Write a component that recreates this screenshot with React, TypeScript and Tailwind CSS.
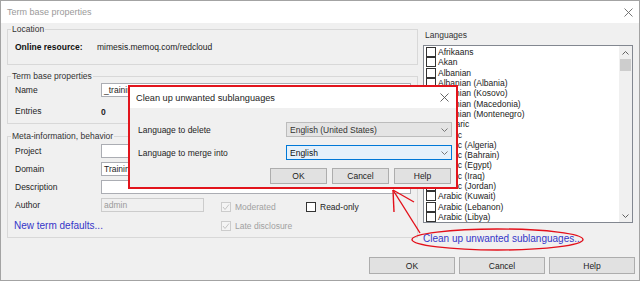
import React from "react";

const FONT = { fontFamily: '"Liberation Sans", Arial, sans-serif' };

function Check({ checked = false, disabled = false }: { checked?: boolean; disabled?: boolean }) {
  return (
    <span
      className={`flex h-[10px] w-[10px] shrink-0 items-center justify-center border ${
        disabled ? "border-[#cccccc] bg-[#f4f4f4]" : "border-[#333333] bg-white"
      }`}
    >
      {checked && (
        <svg width="8" height="8" viewBox="0 0 8 8">
          <polyline points="1,4 3,6.5 7,1.5" fill="none" stroke={disabled ? "#c4c4c4" : "#222"} strokeWidth="1" />
        </svg>
      )}
    </span>
  );
}

function Chevron({ up = false, color = "#555" }: { up?: boolean; color?: string }) {
  return (
    <svg width="7" height="4" viewBox="0 0 7 4">
      <polyline points={up ? "0.5,3.5 3.5,0.5 6.5,3.5" : "0.5,0.5 3.5,3.5 6.5,0.5"} fill="none" stroke={color} strokeWidth="1" />
    </svg>
  );
}

function Close({ size = 9, color = "#555" }: { size?: number; color?: string }) {
  return (
    <svg width={size} height={size} viewBox="0 0 9 9">
      <path d="M0.5 0.5 L8.5 8.5 M8.5 0.5 L0.5 8.5" stroke={color} strokeWidth="0.9" fill="none" />
    </svg>
  );
}

function Btn({ label, w }: { label: string; w: string }) {
  return (
    <div className={`flex h-full items-center justify-center border border-[#adadad] bg-[#e1e1e1] text-[8.5px] text-[#222] ${w}`}>
      {label}
    </div>
  );
}

const languages = [
  "Afrikaans",
  "Akan",
  "Albanian",
  "Albanian (Albania)",
  "Albanian (Kosovo)",
  "Albanian (Macedonia)",
  "Albanian (Montenegro)",
  "Amharic",
  "Arabic",
  "Arabic (Algeria)",
  "Arabic (Bahrain)",
  "Arabic (Egypt)",
  "Arabic (Iraq)",
  "Arabic (Jordan)",
  "Arabic (Kuwait)",
  "Arabic (Lebanon)",
  "Arabic (Libya)",
];

export default function App() {
  return (
    <div className="relative h-[281px] w-[640px] overflow-hidden bg-white" style={FONT}>
      {/* main window */}
      <div className="flex h-[281px] w-[640px] flex-col border border-[#a3a3a3] bg-[#f0f0f0] text-[8.5px] leading-[10px] text-[#1e1e1e]">
        {/* title bar */}
        <div className="flex h-[22px] shrink-0 items-center justify-between bg-white pl-[6px] pr-[6px]">
          <span className="text-[9px] text-[#9a9a9a]">Term base properties</span>
          <Close size={9} color="#666" />
        </div>

        {/* top section */}
        <div className="flex h-[234px] shrink-0 flex-row">
          {/* left column */}
          <div className="ml-[6px] flex w-[411px] flex-col">
            <fieldset className="mt-[1px] h-[41px] border border-[#d8d8d8]">
              <legend className="ml-[3px] px-[1px] leading-[10px] text-[#333]">Location</legend>
              <div className="mt-[8px] flex flex-row pl-[7px]">
                <span className="w-[82px] font-bold text-[#111]">Online resource:</span>
                <span className="text-[#222]">mimesis.memoq.com/redcloud</span>
              </div>
            </fieldset>

            <fieldset className="mt-[6px] h-[53px] border border-[#d8d8d8]">
              <legend className="ml-[3px] px-[1px] leading-[10px] text-[#333]">Term base properties</legend>
              <div className="mt-[2px] flex h-[14px] flex-row items-center pl-[7px]">
                <span className="w-[86px]">Name</span>
                <div className="flex h-[14px] w-[310px] items-center border border-[#abadb3] bg-white pl-[2px]">_training</div>
              </div>
              <div className="mt-[8px] flex flex-row items-center pl-[7px]">
                <span className="w-[86px]">Entries</span>
                <span className="mt-[2px] font-bold">0</span>
              </div>
            </fieldset>

            <fieldset className="mt-[7px] h-[107px] border border-[#d8d8d8]">
              <legend className="ml-[3px] px-[1px] leading-[10px] text-[#333]">Meta-information, behavior</legend>
              <div className="mt-[3px] flex flex-col gap-[4px] pl-[7px]">
                <div className="flex h-[14px] flex-row items-center">
                  <span className="w-[86px]">Project</span>
                  <div className="h-[14px] w-[310px] border border-[#abadb3] bg-white" />
                </div>
                <div className="flex h-[14px] flex-row items-center">
                  <span className="w-[86px]">Domain</span>
                  <div className="flex h-[14px] w-[310px] items-center border border-[#abadb3] bg-white pl-[2px]">Training</div>
                </div>
                <div className="flex h-[14px] flex-row items-center">
                  <span className="w-[86px]">Description</span>
                  <div className="h-[14px] w-[310px] border border-[#abadb3] bg-white" />
                </div>
                <div className="flex h-[14px] flex-row items-center">
                  <span className="w-[86px]">Author</span>
                  <div className="flex h-[14px] w-[103px] items-center border border-[#cccccc] bg-[#f0f0f0] pl-[2px] text-[#9a9a9a]">
                    admin
                  </div>
                  <div className="ml-[17px] flex w-[85px] flex-row items-center gap-[4px] self-end">
                    <Check checked disabled />
                    <span className="text-[#a0a0a0]">Moderated</span>
                  </div>
                  <div className="flex flex-row items-center gap-[4px] self-end">
                    <Check />
                    <span>Read-only</span>
                  </div>
                </div>
              </div>
              <div className="mt-[8px] flex flex-row items-center pl-[6px]">
                <span className="w-[207px] text-[10px] leading-[12px] text-[#3535c8]">New term defaults...</span>
                <div className="flex flex-row items-center gap-[4px]">
                  <Check checked disabled />
                  <span className="text-[#a0a0a0]">Late disclosure</span>
                </div>
              </div>
            </fieldset>
          </div>

          {/* right column */}
          <div className="ml-[5px] flex w-[210px] flex-col">
            <span className="mt-[7px] pl-[2px] text-[#333]">Languages</span>
            <div className="mt-[5px] flex h-[178px] flex-row border border-[#828790] bg-white">
              <div className="flex flex-1 flex-col pl-[2px] pt-[1px]">
                {languages.map((l) => (
                  <div key={l} className="flex h-[10.3px] flex-row items-center gap-[2px]">
                    <Check />
                    <span className="text-[#1a1a1a]">{l}</span>
                  </div>
                ))}
              </div>
              <div className="flex w-[13px] flex-col items-center bg-[#f0f0f0]">
                <div className="flex h-[13px] items-center justify-center">
                  <Chevron up color="#606060" />
                </div>
                <div className="h-[12px] w-[11px] bg-[#cdcdcd]" />
                <div className="flex-1" />
                <div className="flex h-[13px] items-center justify-center">
                  <Chevron color="#606060" />
                </div>
              </div>
            </div>
            <span className="mt-[10px] text-[10px] leading-[12px] text-[#3535c8]">Clean up unwanted sublanguages...</span>
          </div>
        </div>

        {/* bottom buttons */}
        <div className="flex h-[17px] flex-row justify-end gap-[4px] pr-[4px]">
          <Btn label="OK" w="w-[86px]" />
          <Btn label="Cancel" w="w-[86px]" />
          <Btn label="Help" w="w-[86px]" />
        </div>
      </div>

      {/* dialog overlay */}
      <div className="absolute left-[128px] top-[85px] flex h-[104px] w-[330px] flex-col border-2 border-[#e2141c] bg-[#f0f0f0] text-[8.5px] leading-[10px] text-[#1e1e1e]">
        <div className="flex h-[21px] shrink-0 items-center justify-between bg-white pl-[6px] pr-[7px]">
          <span className="text-[9.2px] text-[#222]">Clean up unwanted sublanguages</span>
          <Close size={9} color="#555" />
        </div>
        <div className="flex flex-col pl-[8px] pr-[4px]">
          <div className="mt-[14px] flex h-[15px] flex-row items-center">
            <span className="w-[148px]">Language to delete</span>
            <div className="flex h-[15px] w-[166px] flex-row items-center justify-between border border-[#bcbcbc] bg-[#e4e4e4] pl-[3px] pr-[3px] text-[#333]">
              <span>English (United States)</span>
              <Chevron color="#777" />
            </div>
          </div>
          <div className="mt-[8px] flex h-[15px] flex-row items-center">
            <span className="w-[148px]">Language to merge into</span>
            <div className="flex h-[15px] w-[166px] flex-row items-center justify-between border border-[#0078d7] bg-[#e5f1fb] pl-[3px] pr-[3px] text-[#111]">
              <span>English</span>
              <Chevron color="#777" />
            </div>
          </div>
          <div className="mt-[8px] flex h-[16px] flex-row justify-end gap-[5px] pr-[1px]">
            <Btn label="OK" w="w-[57px]" />
            <Btn label="Cancel" w="w-[57px]" />
            <Btn label="Help" w="w-[57px]" />
          </div>
        </div>
      </div>

      {/* red annotation */}
      <svg className="pointer-events-none absolute left-0 top-0" width="640" height="281" viewBox="0 0 640 281">
        <g stroke="#e3101a" strokeWidth="1.4" fill="none">
          <path d="M393 190 L420 233" />
          <path d="M393 190 L414 202" />
          <path d="M393 190 L394 212" />
          <ellipse cx="497.5" cy="239.5" rx="85.5" ry="10.5" />
        </g>
      </svg>
    </div>
  );
}
